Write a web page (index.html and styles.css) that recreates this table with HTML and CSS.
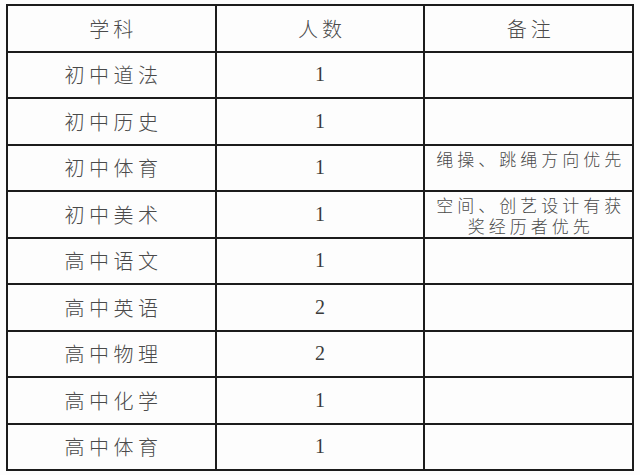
FILE: index.html
```html
<!DOCTYPE html>
<html lang="zh">
<head>
<meta charset="utf-8">
<link rel="stylesheet" href="styles.css">
</head>
<body>
<div class="page">
  <table class="roster">
    <thead>
      <tr><th>学科</th><th>人数</th><th>备注</th></tr>
    </thead>
    <tbody>
      <tr><td class="subj">初中道法</td><td class="num">1</td><td class="note"></td></tr>
      <tr><td class="subj">初中历史</td><td class="num">1</td><td class="note"></td></tr>
      <tr><td class="subj">初中体育</td><td class="num">1</td><td class="note">绳操、跳绳方向优先</td></tr>
      <tr><td class="subj">初中美术</td><td class="num">1</td><td class="note">空间、创艺设计有获<br>奖经历者优先</td></tr>
      <tr><td class="subj">高中语文</td><td class="num">1</td><td class="note"></td></tr>
      <tr><td class="subj">高中英语</td><td class="num">2</td><td class="note"></td></tr>
      <tr><td class="subj">高中物理</td><td class="num">2</td><td class="note"></td></tr>
      <tr><td class="subj">高中化学</td><td class="num">1</td><td class="note"></td></tr>
      <tr><td class="subj">高中体育</td><td class="num">1</td><td class="note"></td></tr>
    </tbody>
  </table>
</div>
</body>
</html>
```
FILE: styles.css
```css
html, body {
  margin: 0;
  padding: 0;
  background: #fdfdfd;
}
.page {
  padding: 4px 0 0 6px;
}
.roster {
  border-collapse: collapse;
  table-layout: fixed;
  width: 628px;
  font-family: "Noto Sans CJK SC", "Noto Sans", sans-serif;
  color: #4a4a4a;
  background: #fdfdfd;
}
.roster th,
.roster td {
  border: 2px solid #1c1c1c;
  padding: 0;
  text-align: center;
  vertical-align: middle;
  width: 33.33%;
}
.roster tr {
  height: 46.5px;
}
.roster th {
  font-weight: 300;
  font-size: 20px;
  letter-spacing: 4px;
  text-indent: 4px;
}
.subj {
  font-weight: 300;
  font-size: 20px;
  letter-spacing: 4.5px;
  text-indent: 4.5px;
}
.num {
  font-family: "Liberation Serif", serif;
  font-size: 20px;
  color: #3a3a3a;
}
.roster .note {
  font-weight: 300;
  font-size: 17px;
  line-height: 21px;
  letter-spacing: 4px;
  padding: 2px 0 0 4px;
  vertical-align: top;
}
```
